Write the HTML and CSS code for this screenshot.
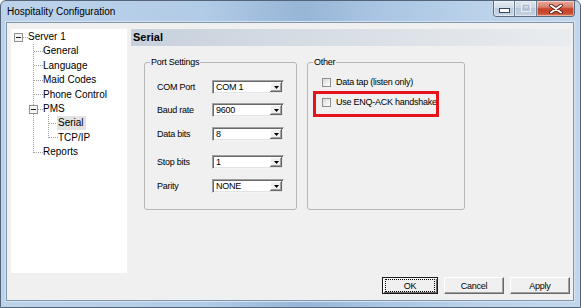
FILE: index.html
```html
<!DOCTYPE html>
<html>
<head>
<meta charset="utf-8">
<link rel="stylesheet" href="styles.css">
</head>
<body>
<div class="window">
  <div class="titlebar">
    <span class="title">Hospitality Configuration</span>
    <div class="caption">
      <span class="cbtn min"><svg width="11" height="5" viewBox="0 0 11 5"><rect x="0.5" y="0.5" width="10" height="4" fill="#fff" stroke="#3a4656"/></svg></span>
      <span class="cbtn max"><svg width="10" height="9" viewBox="0 0 10 9"><rect x="0.5" y="0.5" width="9" height="8" fill="none" stroke="#e9eef4"/><rect x="2.5" y="2.5" width="5" height="4" fill="none" stroke="#aebccc"/></svg></span>
      <span class="cbtn close"><svg width="14" height="10" viewBox="0 0 14 10"><path d="M2 1.5 L12 8.5 M12 1.5 L2 8.5" stroke="#4a1a12" stroke-width="3.6" stroke-linecap="round"/><path d="M2 1.5 L12 8.5 M12 1.5 L2 8.5" stroke="#fff" stroke-width="2" stroke-linecap="round"/></svg></span>
    </div>
  </div>
  <div class="client">
    <div class="main">
      <div class="tree">
        <svg class="tree-lines" width="116" height="140" viewBox="0 0 116 140">
          <g stroke="#a0a0a0" stroke-width="1" stroke-dasharray="1 1" shape-rendering="crispEdges" fill="none">
            <path d="M12 8.5 H17"/>
            <path d="M22.5 15 V124"/>
            <path d="M23 22.5 H32 M23 36.5 H32 M23 51.5 H32 M23 65.5 H32 M27 80.5 H32 M23 123.5 H32"/>
            <path d="M37.5 86 V109"/>
            <path d="M38 94.5 H47 M38 108.5 H47"/>
          </g>
          <g shape-rendering="crispEdges">
            <rect x="3.5" y="4.5" width="8" height="8" fill="#f4f4f4" stroke="#919191"/>
            <path d="M5 8.5 H10" stroke="#1e1e1e"/>
            <rect x="18.5" y="76.5" width="8" height="8" fill="#f4f4f4" stroke="#919191"/>
            <path d="M20 80.5 H25" stroke="#1e1e1e"/>
          </g>
        </svg>
        <div class="node l0">Server 1</div>
        <div class="node l1">General</div>
        <div class="node l1">Language</div>
        <div class="node l1">Maid Codes</div>
        <div class="node l1">Phone Control</div>
        <div class="node l1">PMS</div>
        <div class="node l2"><span class="sel">Serial</span></div>
        <div class="node l2">TCP/IP</div>
        <div class="node l1">Reports</div>
      </div>
      <div class="panel">
        <div class="header">Serial</div>
        <div class="groups">
          <div class="group port">
            <span class="legend">Port Settings</span>
            <div class="row first"><span class="lbl">COM Port</span><span class="combo"><span class="val">COM 1</span><span class="drop"><svg width="5" height="3" viewBox="0 0 5 3"><polygon points="0,0 5,0 2.5,3" fill="#000"/></svg></span></span></div>
            <div class="row r9"><span class="lbl">Baud rate</span><span class="combo"><span class="val">9600</span><span class="drop"><svg width="5" height="3" viewBox="0 0 5 3"><polygon points="0,0 5,0 2.5,3" fill="#000"/></svg></span></span></div>
            <div class="row r10"><span class="lbl">Data bits</span><span class="combo"><span class="val">8</span><span class="drop"><svg width="5" height="3" viewBox="0 0 5 3"><polygon points="0,0 5,0 2.5,3" fill="#000"/></svg></span></span></div>
            <div class="row r14"><span class="lbl">Stop bits</span><span class="combo"><span class="val">1</span><span class="drop"><svg width="5" height="3" viewBox="0 0 5 3"><polygon points="0,0 5,0 2.5,3" fill="#000"/></svg></span></span></div>
            <div class="row r10"><span class="lbl">Parity</span><span class="combo"><span class="val">NONE</span><span class="drop"><svg width="5" height="3" viewBox="0 0 5 3"><polygon points="0,0 5,0 2.5,3" fill="#000"/></svg></span></span></div>
          </div>
          <div class="group other">
            <span class="legend">Other</span>
            <div class="crow"><span class="cb"></span><span>Data tap (listen only)</span></div>
            <div class="crow second"><span class="cb"></span><span>Use ENQ-ACK handshake</span></div>
            <div class="highlight"></div>
          </div>
        </div>
      </div>
    </div>
    <div class="buttons">
      <span class="btn ok"><span class="focus">OK</span></span>
      <span class="btn cancel">Cancel</span>
      <span class="btn apply">Apply</span>
    </div>
  </div>
</div>
</body>
</html>
```
FILE: styles.css
```css
html, body {
  margin: 0;
  padding: 0;
  background: #fff;
}
.window {
  width: 581px;
  height: 308px;
  box-sizing: border-box;
  border: 1px solid #54657a;
  border-radius: 6px 6px 0 0;
  background: linear-gradient(to right, #bcd3ea 0%, #b2cbe6 35%, #97b5d7 52%, #a9c4e2 64%, #bcd3ea 85%, #c2d7ec 100%);
  display: flex;
  flex-direction: column;
  font-family: "Liberation Sans", Arial, sans-serif;
  color: #000;
}
.titlebar {
  height: 21px;
  display: flex;
  align-items: flex-start;
  padding: 0 5px 0 6px;
}
.title {
  font-size: 10px;
  line-height: 21px;
  color: #000;
}
.caption {
  margin-left: auto;
  display: flex;
  height: 16px;
  border: 1px solid #5b6b80;
  border-top: none;
  border-radius: 0 0 4px 4px;
  overflow: hidden;
  box-sizing: border-box;
}
.cbtn {
  display: flex;
  align-items: center;
  justify-content: center;
  height: 15px;
  box-shadow: inset 0 0 0 1px rgba(255,255,255,0.45);
}
.min {
  width: 21px;
  background: linear-gradient(#e3eaf2 0%, #d2dce8 45%, #bccbdc 50%, #c8d6e6 100%);
  border-right: 1px solid #6f7f94;
  padding-top: 3px;
  box-sizing: border-box;
}
.max {
  width: 22px;
  background: linear-gradient(#dbe3ed 0%, #ccd7e4 45%, #b9c8d9 50%, #c3d1e1 100%);
  border-right: 1px solid #6f7f94;
  padding-bottom: 2px;
  box-sizing: border-box;
}
.close {
  width: 37px;
  background: linear-gradient(#e9a899 0%, #d9826f 40%, #c6432c 52%, #c84a30 80%, #dc7a5c 100%);
}
.client {
  margin: 0 6px 6px 5px;
  height: 279px;
  box-sizing: border-box;
  border: 1px solid #8195ad;
  box-shadow: 0 0 0 1px #d6e3f1;
  background: #f0f0f0;
  padding: 6px 3px 6px 4px;
  display: flex;
  flex-direction: column;
}
.main {
  display: flex;
  gap: 4px;
  height: 244px;
}
.tree {
  position: relative;
  width: 116px;
  height: 244px;
  box-sizing: border-box;
  background: #fff;
  padding-top: 1px;
  font-size: 10px;
  flex: none;
}
.tree-lines {
  position: absolute;
  left: 0;
  top: 0;
}
.node {
  height: 14.375px;
  line-height: 14.375px;
  white-space: nowrap;
  position: relative;
}
.l0 { padding-left: 17px; }
.l1 { padding-left: 32px; }
.l2 { padding-left: 47px; }
.sel {
  display: inline-block;
  background: #e3e3e3;
  padding: 0 2px 0 1px;
  margin-left: -1px;
  line-height: 14px;
}
.panel {
  flex: 1;
  display: flex;
  flex-direction: column;
  font-size: 9px;
  letter-spacing: -0.25px;
}
.header {
  height: 17px;
  line-height: 17px;
  padding-left: 2px;
  font-size: 11px;
  font-weight: bold;
  letter-spacing: 0;
  background: linear-gradient(to right, #c7d1dc 0%, #d9dfe6 50%, #e9ecef 100%);
}
.groups {
  display: flex;
  gap: 10px;
  margin-top: 16px;
  padding-left: 13px;
}
.group {
  position: relative;
  height: 148px;
  box-sizing: border-box;
  border: 1px solid #b7b7b7;
  border-radius: 3px;
}
.legend {
  position: absolute;
  top: -6px;
  left: 5px;
  padding: 0 1px;
  line-height: 10px;
  background: #f0f0f0;
}
.port {
  width: 153px;
  padding: 17px 0 0 12px;
}
.other {
  width: 158px;
  padding: 13px 0 0 14px;
}
.row {
  display: flex;
  align-items: center;
  height: 14px;
}
.r9 { margin-top: 9px; }
.r10 { margin-top: 10px; }
.r14 { margin-top: 14px; }
.lbl {
  width: 55px;
}
.combo {
  width: 72px;
  height: 14px;
  box-sizing: border-box;
  display: flex;
  border: 1px solid;
  border-color: #a0a0a0 #f4f4f4 #f4f4f4 #a0a0a0;
  box-shadow: inset 1px 1px 0 #696969, inset -1px -1px 0 #e3e3e3;
  background: #fff;
  padding: 1px;
}
.val {
  flex: 1;
  padding-left: 2px;
  line-height: 10px;
}
.drop {
  width: 12px;
  height: 10px;
  background: #f0f0f0;
  box-shadow: inset -1px -1px 0 #696969, inset 1px 1px 0 #fff, inset -2px -2px 0 #a0a0a0;
  display: flex;
  align-items: center;
  justify-content: center;
}
.crow {
  display: flex;
  align-items: center;
  gap: 5px;
  height: 12px;
}
.crow.second {
  margin-top: 8px;
}
.cb {
  width: 9px;
  height: 9px;
  box-sizing: border-box;
  border: 1px solid #8e8f8f;
  background: linear-gradient(135deg, #d8d8d8 0%, #f4f4f4 70%, #fff 100%);
  flex: none;
}
.highlight {
  position: absolute;
  left: 5px;
  top: 28px;
  width: 126px;
  height: 26px;
  box-sizing: border-box;
  border: 3px solid #e5131c;
}
.buttons {
  display: flex;
  justify-content: flex-end;
  gap: 6px;
  margin-top: 4px;
  height: 17px;
  font-size: 9px;
  letter-spacing: -0.25px;
}
.btn {
  height: 17px;
  box-sizing: border-box;
  display: flex;
  align-items: center;
  justify-content: center;
  background: #f0f0f0;
  border: 1px solid;
  border-color: #fff #696969 #696969 #fff;
  box-shadow: inset -1px -1px 0 #a0a0a0;
}
.ok {
  width: 56px;
  border: 1px solid #1c1c1c;
  box-shadow: inset 1px 1px 0 #fff, inset -1px -1px 0 #696969;
  padding: 2px 3px;
}
.focus {
  flex: 1;
  align-self: stretch;
  display: flex;
  align-items: center;
  justify-content: center;
  outline: 1px dotted #000;
}
.cancel { width: 60px; }
.apply { width: 60px; }
```
